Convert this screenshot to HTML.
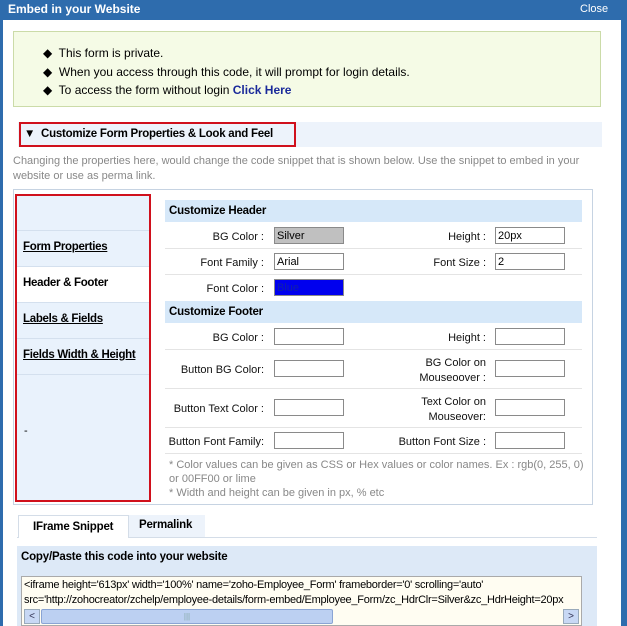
<!DOCTYPE html>
<html><head><style>
*{margin:0;padding:0;box-sizing:border-box}
body{width:627px;height:626px;overflow:hidden;background:#fff;font-family:"Liberation Sans",Arial,sans-serif;font-size:12px;color:#000;position:relative}
.a{position:absolute}
.lb{position:absolute;text-align:right;font-size:11px;color:#111}
.in{position:absolute;width:70px;height:17px;border:1px solid #8a8a8a;background:#fff;font-size:11px;padding:2px 2px;line-height:12px}
.sep{position:absolute;left:165px;width:417px;height:1px;background:#e4e4e4}
.nav{position:absolute;left:23px;font-weight:bold;font-size:11.5px;letter-spacing:-0.3px;text-decoration:underline}
.ns{position:absolute;left:17px;width:132px;height:1px;background:#d4e0ee}
</style></head><body>
<div class="a" style="left:0;top:0;width:627px;height:20px;background:#2e6cad"></div>
<div class="a" style="left:8px;top:2px;color:#fff;font-weight:bold;font-size:12px">Embed in your Website</div>
<div class="a" style="left:580px;top:3px;color:#fff;font-size:11px">Close</div>
<div class="a" style="left:0;top:20px;width:3px;height:606px;background:#2e6cad"></div>
<div class="a" style="left:621px;top:20px;width:6px;height:606px;background:#2e6cad"></div>

<div class="a" style="left:13px;top:31px;width:588px;height:76px;background:#f5fbe6;border:1px solid #cbdba8"></div>
<div class="a" style="left:43px;top:44px;line-height:18.5px;font-size:12px">
<div>◆&nbsp; This form is private.</div>
<div>◆&nbsp; When you access through this code, it will prompt for login details.</div>
<div>◆&nbsp; To access the form without login <b style="color:#1a2a9a">Click Here</b></div>
</div>

<div class="a" style="left:18px;top:122px;width:584px;height:25px;background:#edf3fb"></div>
<div class="a" style="left:19px;top:122px;width:277px;height:25px;border:2px solid #d0101c"></div>
<div class="a" style="left:24px;top:128px;font-size:11.5px;font-weight:bold;letter-spacing:-0.25px">▼&nbsp;&nbsp;Customize Form Properties &amp; Look and Feel</div>
<div class="a" style="left:13px;top:154px;width:580px;font-size:11px;color:#888;line-height:15px">Changing the properties here, would change the code snippet that is shown below. Use the snippet to embed in your website or use as perma link.</div>

<div class="a" style="left:13px;top:189px;width:580px;height:316px;border:1px solid #c6d3e2"></div>
<div class="a" style="left:15px;top:194px;width:136px;height:308px;background:#e9f2fc;border:2px solid #d0101c"></div>
<div class="a" style="left:17px;top:266px;width:132px;height:36px;background:#fff"></div>
<div class="ns" style="top:230px"></div><div class="ns" style="top:266px"></div><div class="ns" style="top:302px"></div><div class="ns" style="top:338px"></div><div class="ns" style="top:374px"></div>
<div class="nav" style="top:241px">Form Properties</div>
<div class="nav" style="top:277px;text-decoration:none">Header &amp; Footer</div>
<div class="nav" style="top:313px">Labels &amp; Fields</div>
<div class="nav" style="top:349px">Fields Width &amp; Height</div>
<div class="a" style="left:24px;top:425px;font-size:11px">-</div>

<div class="a" style="left:165px;top:200px;width:417px;height:22px;background:#d6e8f9"></div>
<div class="a" style="left:169px;top:205px;font-weight:bold;font-size:11.5px;letter-spacing:-0.2px">Customize Header</div>
<div class="lb" style="left:160px;width:104px;top:231px">BG Color :</div><div class="in" style="left:274px;top:227px;background:#c0c0c0">Silver</div>
<div class="lb" style="left:380px;width:106px;top:231px">Height :</div><div class="in" style="left:495px;top:227px">20px</div>
<div class="sep" style="top:248px"></div>
<div class="lb" style="left:160px;width:104px;top:257px">Font Family :</div><div class="in" style="left:274px;top:253px">Arial</div>
<div class="lb" style="left:380px;width:106px;top:257px">Font Size :</div><div class="in" style="left:495px;top:253px">2</div>
<div class="sep" style="top:274px"></div>
<div class="lb" style="left:160px;width:104px;top:283px">Font Color :</div><div class="in" style="left:274px;top:279px;background:#0000ee;color:#1020aa">Blue</div>

<div class="a" style="left:165px;top:301px;width:417px;height:22px;background:#d6e8f9"></div>
<div class="a" style="left:169px;top:306px;font-weight:bold;font-size:11.5px;letter-spacing:-0.2px">Customize Footer</div>
<div class="lb" style="left:160px;width:104px;top:332px">BG Color :</div><div class="in" style="left:274px;top:328px"></div>
<div class="lb" style="left:380px;width:106px;top:332px">Height :</div><div class="in" style="left:495px;top:328px"></div>
<div class="sep" style="top:349px"></div>
<div class="lb" style="left:160px;width:104px;top:364px">Button BG Color:</div><div class="in" style="left:274px;top:360px"></div>
<div class="lb" style="left:380px;width:106px;top:356px;line-height:15px">BG Color on<br>Mouseoover :</div><div class="in" style="left:495px;top:360px"></div>
<div class="sep" style="top:388px"></div>
<div class="lb" style="left:160px;width:104px;top:403px">Button Text Color :</div><div class="in" style="left:274px;top:399px"></div>
<div class="lb" style="left:380px;width:106px;top:395px;line-height:15px">Text Color on<br>Mouseover:</div><div class="in" style="left:495px;top:399px"></div>
<div class="sep" style="top:427px"></div>
<div class="lb" style="left:160px;width:104px;top:436px">Button Font Family:</div><div class="in" style="left:274px;top:432px"></div>
<div class="lb" style="left:380px;width:106px;top:436px">Button Font Size :</div><div class="in" style="left:495px;top:432px"></div>
<div class="sep" style="top:453px"></div>
<div class="a" style="left:169px;top:458px;width:415px;font-size:11px;color:#888;line-height:14px">* Color values can be given as CSS or Hex values or color names. Ex : rgb(0, 255, 0) or 00FF00 or lime<br>* Width and height can be given in px, % etc</div>

<div class="a" style="left:17px;top:537px;width:580px;height:1px;background:#d4dde8"></div>
<div class="a" style="left:18px;top:515px;width:111px;height:23px;background:#fff;border:1px solid #d4dde8;border-bottom:none"></div>
<div class="a" style="left:129px;top:515px;width:76px;height:22px;background:#edf3fb"></div>
<div class="a" style="left:33px;top:521px;font-weight:bold;font-size:11.5px;letter-spacing:-0.2px">IFrame Snippet</div>
<div class="a" style="left:139px;top:519px;font-weight:bold;font-size:11.5px;letter-spacing:-0.2px">Permalink</div>

<div class="a" style="left:17px;top:546px;width:580px;height:80px;background:#dde9f7"></div>
<div class="a" style="left:21px;top:551px;font-weight:bold;font-size:11.5px;letter-spacing:-0.2px">Copy/Paste this code into your website</div>
<div class="a" style="left:21px;top:576px;width:561px;height:50px;background:#fffdf2;border:1px solid #aaa"></div>
<div class="a" style="left:24px;top:578px;font-size:11px;line-height:15px;white-space:nowrap;width:555px;overflow:hidden;letter-spacing:-0.25px">&lt;iframe height='613px' width='100%' name='zoho-Employee_Form' frameborder='0' scrolling='auto'<br>src='http://zohocreator/zchelp/employee-details/form-embed/Employee_Form/zc_HdrClr=Silver&amp;zc_HdrHeight=20px</div>
<div class="a" style="left:24px;top:609px;width:16px;height:15px;background:#c8d8f4;border:1px solid #9ab;color:#335;font-size:10px;text-align:center;line-height:13px">&lt;</div>
<div class="a" style="left:41px;top:609px;width:292px;height:15px;background:#bcd0f2;border:1px solid #8aa4d4;border-radius:2px;color:#8aa;font-size:8px;text-align:center;line-height:13px">|||</div>
<div class="a" style="left:563px;top:609px;width:16px;height:15px;background:#c8d8f4;border:1px solid #9ab;color:#335;font-size:10px;text-align:center;line-height:13px">&gt;</div>
</body></html>
